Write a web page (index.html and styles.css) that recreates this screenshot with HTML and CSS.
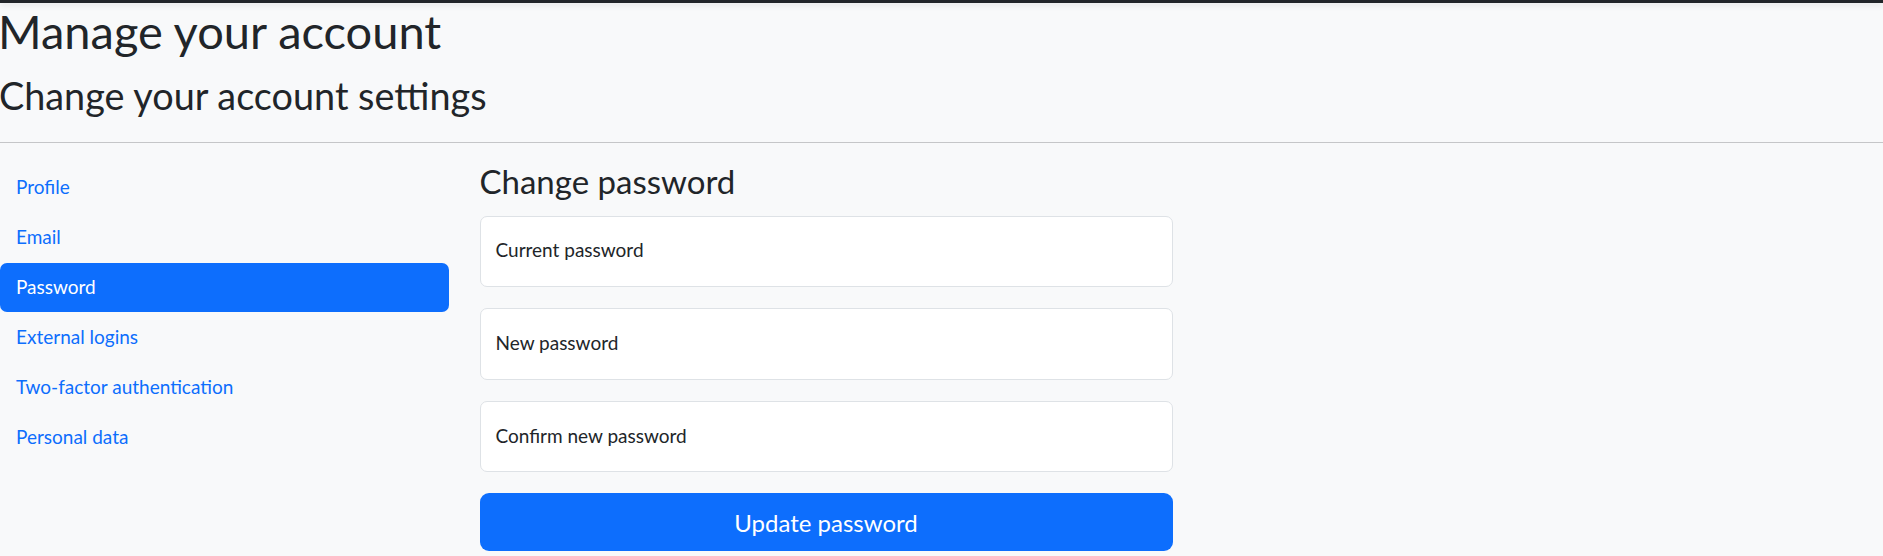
FILE: index.html
```html
<!DOCTYPE html>
<html lang="en">
<head>
<meta charset="utf-8">
<title>Manage your account</title>
<link rel="stylesheet" href="styles.css">
</head>
<body>
<div class="topbar"></div>
<main class="page">
  <header class="page-head">
    <h1 class="title">Manage your account</h1>
    <h2 class="subtitle">Change your account settings</h2>
  </header>
  <hr class="divider">
  <div class="layout">
    <nav class="side-nav">
      <a class="nav-link" href="#">Profile</a>
      <a class="nav-link" href="#">Email</a>
      <a class="nav-link active" href="#">Password</a>
      <a class="nav-link" href="#">External logins</a>
      <a class="nav-link" href="#">Two-factor authentication</a>
      <a class="nav-link" href="#">Personal data</a>
    </nav>
    <section class="content">
      <h3 class="section-title">Change password</h3>
      <form class="form">
        <label class="field">Current password</label>
        <label class="field">New password</label>
        <label class="field">Confirm new password</label>
        <button type="button" class="btn-primary">Update password</button>
      </form>
    </section>
  </div>
</main>
</body>
</html>
```

FILE: styles.css
```css
html, body {
  margin: 0;
  padding: 0;
}
body {
  background: #f8f9fa;
  color: #212529;
  font-family: Lato, "Open Sans", sans-serif;
  overflow: hidden;
}
.topbar {
  height: 3px;
  background: #212529;
  box-shadow: 0 2px 6px rgba(0, 0, 0, 0.12);
}
.page-head {
  display: flex;
  flex-direction: column;
}
.title {
  margin: 0 0 0 -2px;
  font-size: 47px;
  line-height: 56.4px;
  font-weight: 400;
}
.subtitle {
  margin: 13.3px 0 0 -1px;
  font-size: 37.8px;
  line-height: 45.4px;
  font-weight: 400;
}
.divider {
  margin: 23.9px 0 0;
  border: 0;
  border-top: 1px solid #c5c6c8;
  height: 0;
}
.layout {
  display: flex;
  gap: 31px;
  margin-top: 20.3px;
}
.side-nav {
  width: 448.5px;
  display: flex;
  flex-direction: column;
  gap: 1px;
}
.nav-link {
  display: block;
  height: 49px;
  line-height: 47px;
  padding: 0 16px 2px;
  box-sizing: border-box;
  font-size: 19px;
  color: #0d6efd;
  text-decoration: none;
  border-radius: 7px;
}
.nav-link.active {
  background: #0d6efd;
  color: #fff;
}
.content {
  width: 693px;
}
.section-title {
  margin: -1px 0 13.8px;
  font-size: 33px;
  line-height: 39.6px;
  font-weight: 400;
}
.form {
  display: flex;
  flex-direction: column;
  gap: 21px;
}
.field {
  box-sizing: border-box;
  height: 71.6px;
  display: flex;
  align-items: center;
  padding: 0 15px 3px;
  background: #fff;
  border: 1px solid #dee2e6;
  border-radius: 7px;
  font-size: 19px;
  color: #212529;
}
.btn-primary {
  height: 58px;
  border: 0;
  border-radius: 9px;
  background: #0d6efd;
  color: #fff;
  font-family: inherit;
  font-size: 24px;
  cursor: pointer;
}
```
